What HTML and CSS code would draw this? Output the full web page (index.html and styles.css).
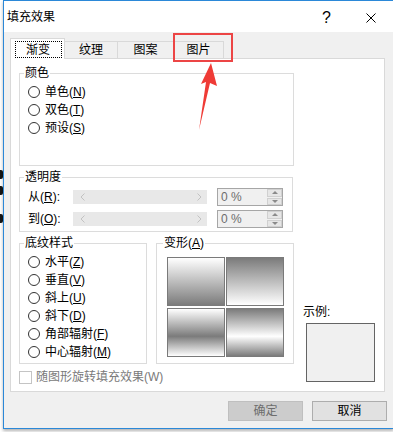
FILE: index.html
```html
<!DOCTYPE html>
<html lang="zh-CN">
<head>
    <meta charset="UTF-8">
    <title>填充效果</title>
    <link rel="stylesheet" href="styles.css">
</head>
<body>
    <div class="screen">
        <div class="behind">
            <span class="ink ink1"></span>
            <span class="ink ink2"></span>
            <span class="ink ink3"></span>
        </div>

        <div class="window">
            <div class="titlebar">
                <span class="title">填充效果</span>
                <span class="help">?</span>
                <svg class="close" width="10" height="10" viewBox="0 0 10 10">
                    <path d="M0.5 0.5 L9.5 9.5 M9.5 0.5 L0.5 9.5" stroke="#000" stroke-width="1" fill="none"/>
                </svg>
            </div>

            <div class="client">
                <div class="tabs">
                    <div class="tab active"><span class="focus">渐变</span></div>
                    <div class="tab t2">纹理</div>
                    <div class="tab t3">图案</div>
                    <div class="tab t4">图片</div>
                </div>

                <div class="panel">
                    <div class="left-col">
                        <fieldset class="group colors">
                            <legend>颜色</legend>
                            <div class="radio"><i></i><span>单色(<u>N</u>)</span></div>
                            <div class="radio"><i></i><span>双色(<u>T</u>)</span></div>
                            <div class="radio"><i></i><span>预设(<u>S</u>)</span></div>
                        </fieldset>

                        <fieldset class="group trans">
                            <legend>透明度</legend>
                            <div class="srow">
                                <span class="slbl">从(<u>R</u>):</span>
                                <div class="track">
                                    <svg width="5" height="8" viewBox="0 0 5 8"><path d="M4.5 0.5 L1 4 L4.5 7.5" stroke="#c2c2c2" fill="none"/></svg>
                                    <svg width="5" height="8" viewBox="0 0 5 8"><path d="M0.5 0.5 L4 4 L0.5 7.5" stroke="#c2c2c2" fill="none"/></svg>
                                </div>
                                <div class="spin">
                                    <span class="val">0 %</span>
                                    <div class="spin-btns"><b class="up"></b><b class="down"></b></div>
                                </div>
                            </div>
                            <div class="srow">
                                <span class="slbl">到(<u>O</u>):</span>
                                <div class="track">
                                    <svg width="5" height="8" viewBox="0 0 5 8"><path d="M4.5 0.5 L1 4 L4.5 7.5" stroke="#c2c2c2" fill="none"/></svg>
                                    <svg width="5" height="8" viewBox="0 0 5 8"><path d="M0.5 0.5 L4 4 L0.5 7.5" stroke="#c2c2c2" fill="none"/></svg>
                                </div>
                                <div class="spin">
                                    <span class="val">0 %</span>
                                    <div class="spin-btns"><b class="up"></b><b class="down"></b></div>
                                </div>
                            </div>
                        </fieldset>

                        <div class="bottom-row">
                            <fieldset class="group styles">
                                <legend>底纹样式</legend>
                                <div class="radio"><i></i><span>水平(<u>Z</u>)</span></div>
                                <div class="radio"><i></i><span>垂直(<u>V</u>)</span></div>
                                <div class="radio"><i></i><span>斜上(<u>U</u>)</span></div>
                                <div class="radio"><i></i><span>斜下(<u>D</u>)</span></div>
                                <div class="radio"><i></i><span>角部辐射(<u>F</u>)</span></div>
                                <div class="radio"><i></i><span>中心辐射(<u>M</u>)</span></div>
                            </fieldset>

                            <fieldset class="group variants">
                                <legend>变形(<u>A</u>)</legend>
                                <div class="tiles">
                                    <div class="tile v1"></div>
                                    <div class="tile v2"></div>
                                    <div class="tile v3"></div>
                                    <div class="tile v4"></div>
                                </div>
                            </fieldset>
                        </div>

                        <div class="check-row">
                            <span class="box"></span>
                            <span>随图形旋转填充效果(W)</span>
                        </div>
                    </div>

                    <div class="sample-col">
                        <div class="sample-label">示例:</div>
                        <div class="sample"></div>
                    </div>
                </div>

                <div class="buttons">
                    <button class="btn disabled">确定</button>
                    <button class="btn">取消</button>
                </div>
            </div>
        </div>

        <!-- annotation drawn over the screenshot -->
        <div class="mark-box"></div>
        <svg class="mark-arrow" width="30" height="75" viewBox="0 0 30 75">
            <polygon points="21,3 27,26 20,23 9,70 16,22 11,24" fill="#ef3b36"/>
        </svg>
    </div>
</body>
</html>
```

FILE: styles.css
```css
body {
    margin: 0;
    font-family: "Liberation Sans", "Noto Sans CJK SC", sans-serif;
    font-size: 12px;
    line-height: 14px;
    color: #000;
    background: #fff;
}

.screen {
    position: relative;
    display: flex;
    width: 393px;
    height: 432px;
    overflow: hidden;
    background: #fff;
}

/* bit of the document behind the dialog */
.behind {
    width: 3px;
    flex: none;
    display: flex;
    flex-direction: column;
}

.ink {
    display: block;
    height: 9px;
    background: #151515;
    border-radius: 0 2px 2px 0;
}

.ink1 { margin-top: 170px; }
.ink2 { margin-top: 7px; }
.ink3 { margin-top: 19px; }

.window {
    flex: none;
    width: 391px;
    height: 429px;
    box-sizing: border-box;
    border-top: 1px solid #2b88d8;
    border-left: 1px solid #2b88d8;
    border-bottom: 1px solid #2b88d8;
    background: #f0f0f0;
    box-shadow: 0 2px 3px rgba(0, 0, 0, 0.3);
    display: flex;
    flex-direction: column;
}

.titlebar {
    height: 31px;
    flex: none;
    background: #fff;
    display: flex;
    align-items: center;
    padding: 0 18px 0 3px;
}

.help {
    margin-left: auto;
    margin-right: 35px;
    font-size: 16px;
    margin-top: 3px;
}

.close {
    margin-top: 3px;
}

.client {
    padding: 6px 0 0 6px;
}

.tabs {
    display: flex;
    align-items: flex-end;
    height: 20px;
}

.tab {
    box-sizing: border-box;
    height: 17px;
    border: 1px solid #d9d9d9;
    border-left: none;
    border-bottom: none;
    background: #f0f0f0;
    display: flex;
    align-items: center;
    justify-content: center;
}

.tab.active {
    width: 55px;
    height: 21px;
    border-left: 1px solid #d9d9d9;
    background: #fff;
    margin-bottom: -1px;
    position: relative;
    z-index: 1;
    align-items: flex-start;
}

.focus {
    margin: 2px 0 0 1px;
    width: 47px;
    height: 17px;
    box-sizing: border-box;
    border: 1px dotted #000;
    display: flex;
    align-items: center;
    justify-content: center;
}

.t2 { width: 53px; }
.t3 { width: 56px; }
.t4 { width: 50px; }

.panel {
    box-sizing: border-box;
    width: 375px;
    height: 334px;
    border: 1px solid #d9d9d9;
    background: #fff;
    display: flex;
    padding-left: 8px;
}

.left-col {
    width: 275px;
    display: flex;
    flex-direction: column;
}

.group {
    margin: 0;
    border: 1px solid #dcdcdc;
    padding: 0 0 0 8px;
    min-width: 0;
    box-sizing: border-box;
}

.group legend {
    padding: 0 1px;
    margin-left: -4px;
    line-height: 14px;
}

.colors {
    margin-top: 7px;
    width: 275px;
    padding-top: 3px;
    padding-bottom: 28px;
}

.trans {
    margin-top: 4px;
    width: 274px;
    padding-top: 4px;
    padding-bottom: 3px;
}

.bottom-row {
    display: flex;
    gap: 9px;
    margin-top: 4px;
}

.styles {
    width: 128px;
    padding-top: 3px;
    padding-bottom: 2px;
}

.variants {
    width: 138px;
    padding: 7px 0 6px 10px;
}

.radio {
    display: flex;
    align-items: center;
    gap: 5px;
    height: 18px;
    white-space: nowrap;
}

.radio i {
    width: 12px;
    height: 12px;
    box-sizing: border-box;
    border: 1px solid #333;
    border-radius: 50%;
    background: #fff;
}

.srow {
    display: flex;
    align-items: center;
    height: 18px;
}

.srow + .srow {
    margin-top: 4px;
}

.slbl {
    width: 45px;
}

.track {
    box-sizing: border-box;
    width: 134px;
    height: 14px;
    background: #e8e8e8;
    display: flex;
    align-items: center;
    justify-content: space-between;
    padding: 0 5px 0 7px;
}

.spin {
    margin-left: 10px;
    box-sizing: border-box;
    width: 66px;
    height: 18px;
    border: 1px solid #a6a6a6;
    background: #f0f0f0;
    display: flex;
    align-items: center;
}

.val {
    flex: 1;
    padding-left: 3px;
    color: #6d6d6d;
}

.spin-btns {
    width: 15px;
    height: 16px;
    display: flex;
    flex-direction: column;
    gap: 1px;
}

.spin-btns b {
    flex: 1;
    background: #e6e6e6;
    border: 1px solid #d0d0d0;
    box-sizing: border-box;
    display: flex;
    align-items: center;
    justify-content: center;
}

.spin-btns b::after {
    content: "";
    border-left: 3px solid transparent;
    border-right: 3px solid transparent;
}

.spin-btns .up::after {
    border-bottom: 3px solid #8a8a8a;
}

.spin-btns .down::after {
    border-top: 3px solid #8a8a8a;
}

.tiles {
    display: grid;
    grid-template-columns: 58px 58px;
    grid-auto-rows: 49px;
    column-gap: 1px;
    row-gap: 2px;
}

.tile {
    box-sizing: border-box;
    border: 1px solid #7a7a7a;
}

.v1 { background: linear-gradient(#fff, #7b7b7b); }
.v2 { background: linear-gradient(#7b7b7b, #fff); }
.v3 { background: linear-gradient(#fff, #7b7b7b 58%, #fff); }
.v4 { background: linear-gradient(#7b7b7b, #fff 58%, #7b7b7b); }

.check-row {
    margin-top: 6px;
    height: 14px;
    display: flex;
    align-items: center;
    gap: 4px;
    color: #7a7a7a;
}

.check-row .box {
    width: 13px;
    height: 13px;
    box-sizing: border-box;
    border: 1px solid #c4c4c4;
    background: #fff;
}

.sample-col {
    margin-left: 9px;
    width: 72px;
    display: flex;
    flex-direction: column;
    justify-content: flex-end;
    padding-bottom: 9px;
}

.sample-label {
    margin-bottom: 4px;
}

.sample {
    margin-left: 3px;
    width: 69px;
    height: 59px;
    box-sizing: border-box;
    border: 1px solid #646464;
    background: #f0f0f0;
}

.buttons {
    display: flex;
    gap: 9px;
    margin-top: 9px;
    padding-left: 218px;
}

.btn {
    width: 75px;
    height: 20px;
    box-sizing: border-box;
    padding: 0;
    font-family: inherit;
    font-size: 12px;
    line-height: 14px;
    background: #e1e1e1;
    border: 1px solid #adadad;
    color: #000;
}

.btn.disabled {
    background: #cccccc;
    border-color: #bfbfbf;
    color: #6d6d6d;
}

/* red annotation over the tab strip */
.mark-box {
    position: absolute;
    left: 173px;
    top: 33px;
    width: 60px;
    height: 29px;
    box-sizing: border-box;
    border: 2px solid #ec4545;
}

.mark-arrow {
    position: absolute;
    left: 190px;
    top: 60px;
}
```
